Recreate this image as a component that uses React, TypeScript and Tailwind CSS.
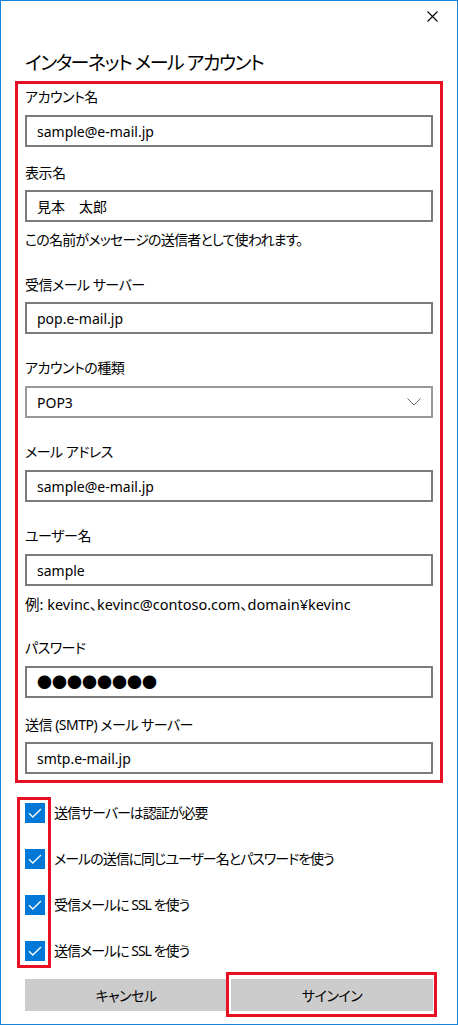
import React from 'react';

const FONT = "font-['Noto_Sans','Noto_Sans_CJK_JP',sans-serif] [font-feature-settings:'palt']";

function Label({ text, className = '' }: { text: string; className?: string }) {
  return (
    <div className={`h-[20px] text-[14px] leading-[20px] tracking-[-0.5px] text-black ${className}`}>{text}</div>
  );
}

function TextBox({ value, className = '' }: { value: string; className?: string }) {
  return (
    <div
      className={`flex h-[32px] w-[408px] items-center border-2 border-[#7a7a7a] pl-[10px] text-[14px] text-black ${className}`}
    >
      {value}
    </div>
  );
}

function Check() {
  return (
    <div className="flex h-[20px] w-[20px] shrink-0 items-center justify-center bg-[#0078d7]">
      <svg width="14" height="10" viewBox="0 0 14 10" fill="none">
        <path d="M1 5.2 L4.8 9 L13 1" stroke="white" strokeWidth="1.3" />
      </svg>
    </div>
  );
}

const CHECKS = [
  '送信サーバーは認証が必要',
  'メールの送信に同じユーザー名とパスワードを使う',
  '受信メールに SSL を使う',
  '送信メールに SSL を使う',
];

export default function App() {
  return (
    <div className={`h-[1025px] w-[458px] border border-[#1883d7] bg-white ${FONT}`}>
      {/* close */}
      <div className="flex justify-end pr-[19px] pt-[10px]">
        <svg width="11" height="11" viewBox="0 0 11 11">
          <path d="M0.5 0.5 L10.5 10.5 M10.5 0.5 L0.5 10.5" stroke="black" strokeWidth="1.1" />
        </svg>
      </div>

      <h1 className="ml-[24px] mt-[27px] h-[28px] text-[19px] leading-[28px] font-normal tracking-[-1.5px] text-black">
        インターネット メール アカウント
      </h1>

      {/* account fields */}
      <div className="ml-[14px] mt-[4px] w-[428px] border-[3px] border-[#e81123] px-[7px] pb-[6px] pt-[3px]">
        <Label text="アカウント名" />
        <TextBox value="sample@e-mail.jp" className="mt-[8px]" />

        <Label text="表示名" className="mt-[16px]" />
        <TextBox value="見本　太郎" className="mt-[7px]" />
        <div className="mt-[8px] h-[20px] text-[14px] leading-[20px] tracking-[-0.8px] text-black">
          この名前がメッセージの送信者として使われます。
        </div>

        <Label text="受信メール サーバー" className="mt-[25px]" />
        <TextBox value="pop.e-mail.jp" className="mt-[7px]" />

        <Label text="アカウントの種類" className="mt-[24px]" />
        <div className="mt-[8px] flex h-[32px] w-[408px] items-center justify-between border-2 border-[#999999] pl-[10px] pr-[10px] text-[14px] text-black">
          <span>POP3</span>
          <svg width="14" height="8" viewBox="0 0 14 8" fill="none">
            <path d="M0.5 0.5 L7 7 L13.5 0.5" stroke="#666666" strokeWidth="1" />
          </svg>
        </div>

        <Label text="メール アドレス" className="mt-[24px]" />
        <TextBox value="sample@e-mail.jp" className="mt-[8px]" />

        <Label text="ユーザー名" className="mt-[24px]" />
        <TextBox value="sample" className="mt-[8px]" />
        <div className="mt-[8px] h-[20px] text-[14.5px] leading-[20px] text-black">
          例: kevinc、kevinc@contoso.com、domain¥kevinc
        </div>

        <Label text="パスワード" className="mt-[24px]" />
        <TextBox value="●●●●●●●●" className="mt-[8px] text-[15px]" />

        <Label text="送信 (SMTP) メール サーバー" className="mt-[17px]" />
        <TextBox value="smtp.e-mail.jp" className="mt-[7px]" />
      </div>

      {/* options */}
      <div className="relative ml-[24px] mt-[20px] flex flex-col gap-[26px]">
        {CHECKS.map((c) => (
          <div key={c} className="flex h-[20px] items-center gap-[9px]">
            <Check />
            <span className="text-[14px] leading-[20px] tracking-[-1px] text-black">{c}</span>
          </div>
        ))}
        <div className="pointer-events-none absolute -left-[8px] -top-[6px] h-[171px] w-[34px] border-[3px] border-[#e81123]" />
      </div>

      {/* buttons */}
      <div className="ml-[24px] mt-[18px] flex w-[408px] gap-[4px]">
        <button className="h-[32px] flex-1 bg-[#cccccc] text-[14px] tracking-[-0.5px] text-black">キャンセル</button>
        <div className="relative flex-1">
          <button className="h-[32px] w-full bg-[#cccccc] text-[14px] tracking-[-0.5px] text-black">サインイン</button>
          <div className="pointer-events-none absolute -bottom-[6px] -left-[5px] -right-[4px] -top-[7px] border-[3px] border-[#e81123]" />
        </div>
      </div>
    </div>
  );
}
